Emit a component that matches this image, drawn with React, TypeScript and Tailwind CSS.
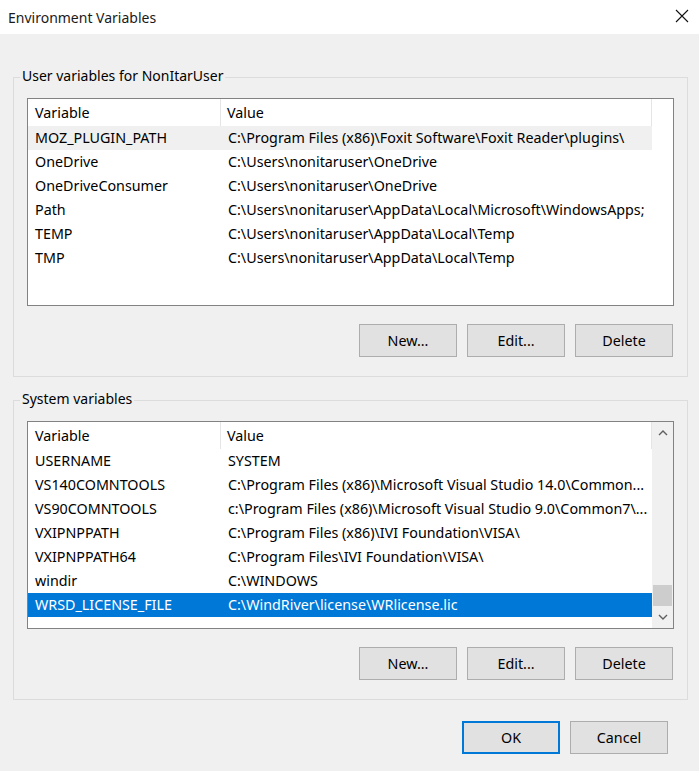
import React from "react";

const font = { fontFamily: '"Noto Sans", "Open Sans", Arial, sans-serif' };

type Row = { name: string; value: string };

const userRows: Row[] = [
  { name: "MOZ_PLUGIN_PATH", value: "C:\\Program Files (x86)\\Foxit Software\\Foxit Reader\\plugins\\" },
  { name: "OneDrive", value: "C:\\Users\\nonitaruser\\OneDrive" },
  { name: "OneDriveConsumer", value: "C:\\Users\\nonitaruser\\OneDrive" },
  { name: "Path", value: "C:\\Users\\nonitaruser\\AppData\\Local\\Microsoft\\WindowsApps;" },
  { name: "TEMP", value: "C:\\Users\\nonitaruser\\AppData\\Local\\Temp" },
  { name: "TMP", value: "C:\\Users\\nonitaruser\\AppData\\Local\\Temp" },
];

const sysRows: Row[] = [
  { name: "USERNAME", value: "SYSTEM" },
  { name: "VS140COMNTOOLS", value: "C:\\Program Files (x86)\\Microsoft Visual Studio 14.0\\Common..." },
  { name: "VS90COMNTOOLS", value: "c:\\Program Files (x86)\\Microsoft Visual Studio 9.0\\Common7\\..." },
  { name: "VXIPNPPATH", value: "C:\\Program Files (x86)\\IVI Foundation\\VISA\\" },
  { name: "VXIPNPPATH64", value: "C:\\Program Files\\IVI Foundation\\VISA\\" },
  { name: "windir", value: "C:\\WINDOWS" },
  { name: "WRSD_LICENSE_FILE", value: "C:\\WindRiver\\license\\WRlicense.lic" },
];

function Header() {
  return (
    <div className="flex h-[27px] items-center text-[14.3px]">
      <div className="flex h-full w-[193px] items-center border-r border-[#e5e5e5] pl-[7px]">Variable</div>
      <div className="flex h-full flex-1 items-center border-r border-[#e5e5e5] pl-[6px]">Value</div>
    </div>
  );
}

function ListRow({ row, state }: { row: Row; state?: "hover" | "selected" }) {
  const cls =
    state === "selected"
      ? "bg-[#0078d7] text-white"
      : state === "hover"
      ? "bg-[#f0f0f0]"
      : "";
  return (
    <div className={`flex h-[24px] items-center whitespace-nowrap text-[14.3px] ${cls}`}>
      <div className="w-[193px] overflow-hidden text-ellipsis pl-[7px]">{row.name}</div>
      <div className="flex-1 overflow-hidden text-ellipsis pl-[7px]">{row.value}</div>
    </div>
  );
}

function Btn({ children, primary }: { children: React.ReactNode; primary?: boolean }) {
  return (
    <button
      className={`flex h-[33px] w-[98px] items-center justify-center bg-[#e1e1e1] text-[14.3px] text-black ${
        primary ? "border-2 border-[#0078d7]" : "border border-[#adadad]"
      }`}
    >
      {children}
    </button>
  );
}

function Group({ label, children }: { label: string; children: React.ReactNode }) {
  return (
    <div className="relative border border-[#dcdcdc] px-[13px] pb-[19px] pt-[20px]">
      <span className="absolute -top-[12px] left-[6px] bg-[#f0f0f0] px-[2px] text-[14px] leading-[20px]">
        {label}
      </span>
      {children}
    </div>
  );
}

function Buttons() {
  return (
    <div className="mt-[18px] flex justify-end gap-[10px] pr-[1px]">
      <Btn>New...</Btn>
      <Btn>Edit...</Btn>
      <Btn>Delete</Btn>
    </div>
  );
}

export default function App() {
  return (
    <div className="flex h-[771px] w-[699px] flex-col bg-[#f0f0f0] text-[15px] text-black" style={font}>
      <div className="flex h-[34px] items-center justify-between bg-white pl-[8px] pr-[10px]">
        <span className="text-[14px] text-[#1a1a1a]">Environment Variables</span>
        <svg width="14" height="14" viewBox="0 0 14 14" className="mb-[2px]">
          <path d="M1 1 L13 13 M13 1 L1 13" stroke="#111" strokeWidth="1.1" fill="none" />
        </svg>
      </div>

      <div className="pl-[13px] pr-[11px] pt-[43px]">
        <Group label="User variables for NonItarUser">
          <div className="h-[208px] border border-[#828282] bg-white">
            <div className="w-[624px]">
              <Header />
              {userRows.map((r, i) => (
                <ListRow key={r.name} row={r} state={i === 0 ? "hover" : undefined} />
              ))}
            </div>
          </div>
          <Buttons />
        </Group>

        <div className="mt-[23px]">
          <Group label="System variables">
            <div className="flex h-[208px] border border-[#828282] bg-white">
              <div className="flex-1 overflow-hidden">
                <Header />
                {sysRows.map((r, i) => (
                  <ListRow key={r.name} row={r} state={i === sysRows.length - 1 ? "selected" : undefined} />
                ))}
              </div>
              <div className="flex w-[21px] flex-col bg-[#f0f0f0]">
                <div className="flex h-[22px] items-center justify-center">
                  <svg width="10" height="6" viewBox="0 0 10 6">
                    <path d="M1 5 L5 1 L9 5" stroke="#606060" strokeWidth="1.4" fill="none" />
                  </svg>
                </div>
                <div className="flex-1" />
                <div className="mx-[1px] h-[21px] bg-[#cdcdcd]" />
                <div className="flex h-[22px] items-center justify-center">
                  <svg width="10" height="6" viewBox="0 0 10 6">
                    <path d="M1 1 L5 5 L9 1" stroke="#606060" strokeWidth="1.4" fill="none" />
                  </svg>
                </div>
              </div>
            </div>
            <Buttons />
          </Group>
        </div>

        <div className="mt-[21px] flex justify-end gap-[10px] pr-[20px]">
          <Btn primary>OK</Btn>
          <Btn>Cancel</Btn>
        </div>
      </div>
    </div>
  );
}
